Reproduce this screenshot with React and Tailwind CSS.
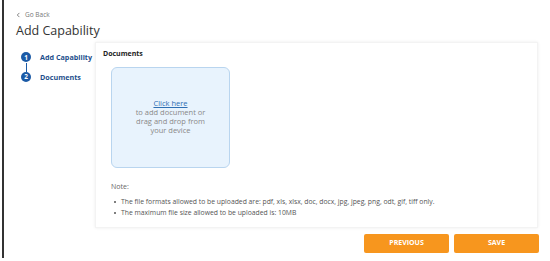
import React from 'react';

const steps = [
  { n: 1, label: 'Add Capability' },
  { n: 2, label: 'Documents' },
];

const App = () => {
  return (
    <div className="w-[550px] h-[261px] bg-white relative overflow-hidden" style={{ fontFamily: '"Open Sans", "Noto Sans", sans-serif' }}>
      <div className="absolute left-[2px] top-0 w-[2px] h-[258px] bg-[#333]" />
      <div className="pl-[16px] pt-[10px]">
        {/* Header */}
        <div className="flex items-center gap-[4px] text-[6.5px] text-[#777] h-[10px]">
          <svg width="5" height="6" viewBox="0 0 8 10" fill="none" stroke="#777" strokeWidth="1.5">
            <path d="M5.5 1.5 L2 5 L5.5 8.5" />
          </svg>
          <span>Go Back</span>
        </div>
        <h1 className="text-[12.5px] leading-[15px] text-[#333] mt-[3px]">Add Capability</h1>
      </div>

      <div className="flex mt-[4px]">
        {/* Steps */}
        <div className="w-[95px] shrink-0 pl-[21px] pt-[10px]">
          {steps.map((s, i) => (
            <div key={s.n}>
              <div className="flex items-center gap-[9px]">
                <div className="w-[10px] h-[10px] shrink-0 rounded-full bg-[#1b5aa6] text-white text-[6.5px] font-bold flex items-center justify-center">
                  {s.n}
                </div>
                <span className="text-[7.2px] font-bold text-[#1d4f8c] whitespace-nowrap">{s.label}</span>
              </div>
              {i === 0 && <div className="ml-[4.5px] w-[1px] h-[9px] bg-[#1b5aa6]" />}
            </div>
          ))}
        </div>

        {/* Card */}
        <div className="w-[443px] h-[186px] bg-white shadow-[0_0_3px_rgba(0,0,0,0.08)] border border-[#f3f3f3] pl-[7px] pt-[6px]">
          <div className="text-[7px] font-bold text-[#222]">Documents</div>
          <div className="ml-[8px] mt-[7px] w-[119px] h-[101px] rounded-[6px] bg-[#e8f3fd] border border-[#b9d5ef] flex flex-col items-center justify-center text-center text-[7.5px] leading-[9px] text-[#888]">
            <span className="text-[#2f6fb3] underline">Click here</span>
            <span>to add document or</span>
            <span>drag and drop from</span>
            <span>your device</span>
          </div>
          <div className="ml-[8px] mt-[14px] text-[7px] text-[#666]">Note:</div>
          <ul className="ml-[11px] mt-[4px] text-[6.8px] leading-[11px] text-[#555]">
            <li className="flex items-center gap-[5px]">
              <span className="w-[2px] h-[2px] rounded-full bg-[#555]" />
              The file formats allowed to be uploaded are: pdf, xls, xlsx, doc, docx, jpg, jpeg, png, odt, gif, tiff only.
            </li>
            <li className="flex items-center gap-[5px]">
              <span className="w-[2px] h-[2px] rounded-full bg-[#555]" />
              The maximum file size allowed to be uploaded is: 10MB
            </li>
          </ul>
        </div>
      </div>

      {/* Buttons */}
      <div className="flex justify-end gap-[5px] pr-[11px] mt-[6px]">
        <button className="w-[85px] h-[19px] bg-[#f7961e] text-white text-[7px] font-bold rounded-[2px]">PREVIOUS</button>
        <button className="w-[85px] h-[19px] bg-[#f7961e] text-white text-[7px] font-bold rounded-[2px]">SAVE</button>
      </div>
    </div>
  );
};

export default App;
